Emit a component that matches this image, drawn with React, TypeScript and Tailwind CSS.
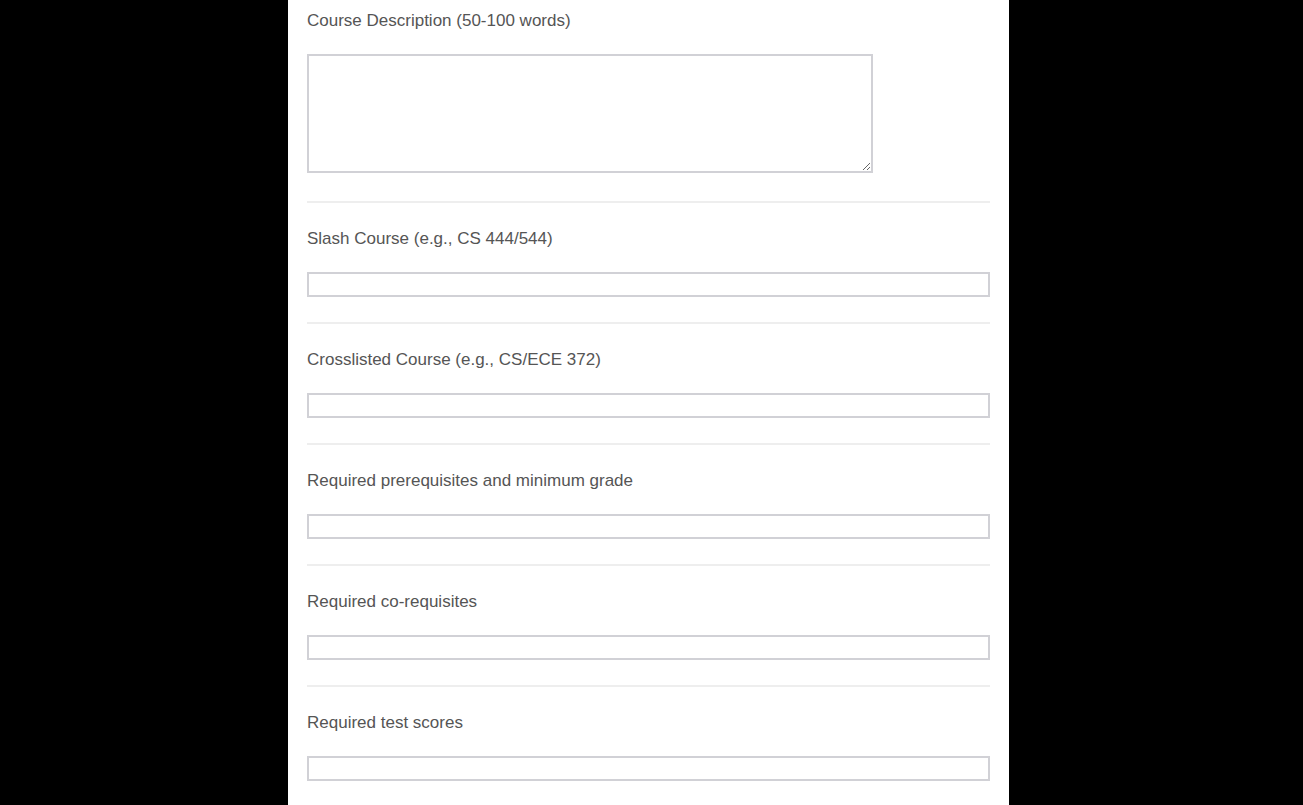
const fields = [
  "Slash Course (e.g., CS 444/544)",
  "Crosslisted Course (e.g., CS/ECE 372)",
  "Required prerequisites and minimum grade",
  "Required co-requisites",
  "Required test scores",
];

export default function App() {
  return (
    <div className="flex min-h-screen justify-center bg-black pr-[6px] font-['Liberation_Sans',Arial,sans-serif] text-[17px] text-[#555]">
      <div className="w-[721px] bg-white px-[19px]">
        {/* Описание курса */}
        <div className="border-b-2 border-[#eeeeee] pt-[11px] pb-[24px]">
          <label className="block leading-[19px]">Course Description (50-100 words)</label>
          <textarea className="mt-[24px] block h-[119px] w-[566px] resize border-2 border-[#d1d1d6] bg-white outline-none" />
          <div className="h-[4px]" />
        </div>

        {fields.map((label, i) => (
          <div
            key={label}
            className={
              i === fields.length - 1
                ? "pt-[26px] pb-[25px]"
                : "border-b-2 border-[#eeeeee] pt-[26px] pb-[25px]"
            }
          >
            <label className="block leading-[19px]">{label}</label>
            <input
              type="text"
              className="mt-[24px] block h-[25px] w-full border-2 border-[#d1d1d6] bg-white outline-none"
            />
          </div>
        ))}
      </div>
    </div>
  );
}
